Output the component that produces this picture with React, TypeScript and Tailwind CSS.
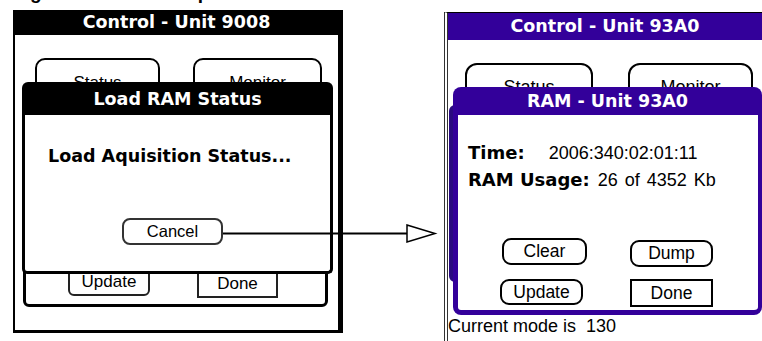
const bold = "font-['DejaVu_Sans',sans-serif] font-bold";
const reg = "font-['Liberation_Sans',Arial,sans-serif]";

function LeftScreen() {
  return (
    <div className="absolute left-[13px] top-[10px] w-[330px] h-[323px] border-l-2 border-r-[5px] border-b-[3px] border-black flex flex-col">
      <div className={`h-[25px] bg-black text-white text-[17.5px] leading-none flex items-center justify-center ${bold}`}>
        Control - Unit 9008
      </div>
      <div className={`relative flex-1 ${reg} text-[17px] text-black`}>
        <div className="absolute left-[20px] top-[23px] w-[125px] h-[40px] border-2 border-black rounded-[10px] flex justify-center pt-[10px]">
          Status
        </div>
        <div className="absolute left-[178px] top-[23px] w-[129px] h-[40px] border-2 border-black rounded-[10px] flex justify-center pt-[10px]">
          Monitor
        </div>

        {/* panel under the dialog */}
        <div className="absolute left-[8px] top-[85px] w-[305px] h-[187px] border-[3px] border-black rounded-b-[6px]">
          <div className="absolute left-[42px] top-[127px] w-[82px] h-[46px] border-2 border-[#222] rounded-[6px] flex items-end justify-center pb-[2px] leading-[20px]">
            Update
          </div>
          <div className="absolute left-[171px] top-[148px] w-[81px] h-[27px] border-2 border-[#222] flex items-end justify-center pb-[2px] leading-[20px]">
            Done
          </div>
        </div>

        {/* Load RAM Status dialog */}
        <div className="absolute left-[7px] top-[47px] w-[311px] h-[192px] flex flex-col">
          <div className={`h-[33px] bg-black rounded-t-[6px] text-white text-[17.5px] flex items-center justify-center pt-[2px] ${bold}`}>
            Load RAM Status
          </div>
          <div className="flex-1 bg-white border-[3px] border-t-0 border-black rounded-b-[5px] flex flex-col">
            <div className={`pt-[31px] pl-[23px] text-[17.5px] leading-[20px] ${bold}`}>
              Load Aquisition Status...
            </div>
            <div className="mt-[52px] ml-[97px] w-[101px] h-[27px] border-2 border-[#333] rounded-[8px] flex items-center justify-center text-[16.5px]">
              Cancel
            </div>
          </div>
        </div>
      </div>
    </div>
  );
}

function Btn({ label, w, h, square, cls }: { label: string; w: string; h: string; square?: boolean; cls?: string }) {
  return (
    <div
      className={`${w} ${h} border-2 border-black flex items-center justify-center ${square ? "" : "rounded-[9px]"} ${cls ?? ""}`}
    >
      {label}
    </div>
  );
}

function RightScreen() {
  return (
    <div className="absolute left-[444px] top-[12px] w-[330px] h-[340px] border-l-4 border-double border-[#333] border-t border-t-black flex flex-col">
      <div className={`h-[27px] bg-[#33009a] text-white text-[17.5px] leading-none flex items-center justify-center pr-[12px] ${bold}`}>
        Control - Unit 93A0
      </div>
      <div className={`relative flex-1 ${reg} text-[18px] text-black`}>
        <div className="absolute left-[17px] top-[23px] w-[128px] h-[40px] border-2 border-black rounded-[12px] flex justify-center pt-[9px]">
          Status
        </div>
        <div className="absolute left-[180px] top-[23px] w-[125px] h-[40px] border-2 border-black rounded-[12px] flex justify-center pt-[9px]">
          Monitor
        </div>

        {/* panel under the dialog */}
        <div className="absolute left-[1px] top-[65px] w-[300px] h-[177px] border-[5px] border-[#2a0a80] rounded-[6px]" />

        {/* RAM dialog */}
        <div className="absolute left-[5px] top-[47px] w-[309px] h-[228px] flex flex-col">
          <div className={`h-[28px] bg-[#33009a] rounded-t-[8px] text-white text-[17.5px] flex items-center justify-center pt-[1px] ${bold}`}>
            RAM - Unit 93A0
          </div>
          <div className="flex-1 bg-white border-[5px] border-r-4 border-t-0 border-[#33009a] rounded-b-[8px] flex flex-col pl-[10px]">
            <div className="mt-[27px] flex items-baseline leading-[22px]">
              <span className={`text-[18px] ${bold}`}>Time:</span>
              <span className="ml-[24px] text-[18px]">2006:340:02:01:11</span>
            </div>
            <div className="mt-[5px] flex items-baseline leading-[22px]">
              <span className={`text-[18px] ${bold}`}>RAM Usage:</span>
              <span className="ml-[8px] text-[18px] [word-spacing:2px]">26 of 4352 Kb</span>
            </div>
            <div className="mt-[47px] flex items-start text-[17.5px]">
              <Btn label="Clear" w="w-[85px]" h="h-[27px]" cls="ml-[34px]" />
              <Btn label="Dump" w="w-[83px]" h="h-[27px]" cls="ml-[43px] mt-[2px]" />
            </div>
            <div className="mt-[12px] flex items-start text-[17.5px]">
              <Btn label="Update" w="w-[83px]" h="h-[26px]" cls="ml-[32px]" />
              <Btn label="Done" w="w-[83px]" h="h-[28px]" square cls="ml-[47px]" />
            </div>
          </div>
        </div>

        <div className="absolute left-0 top-[276px] leading-[20px] whitespace-pre">Current mode is  130</div>
      </div>
    </div>
  );
}

export default function App() {
  return (
    <div className="relative w-[762px] h-[341px] overflow-hidden bg-white">
      {/* caption cut off at the top */}
      <div className="absolute left-0 top-0 w-[762px] h-[5px] overflow-hidden">
        <div className="absolute left-[13px] top-[-17px] whitespace-nowrap font-['Liberation_Sans',Arial,sans-serif] font-bold text-[19px] leading-[19px] text-black">
          Figure 3: RAM Example
        </div>
      </div>

      <LeftScreen />
      <RightScreen />

      {/* arrow from Cancel to the right screen */}
      <svg className="absolute left-0 top-0 pointer-events-none" width="762" height="341">
        <line x1="223" y1="233.5" x2="407" y2="233.5" stroke="#000" strokeWidth="2" />
        <polygon points="407,225 435,233.5 407,242" fill="#fff" stroke="#000" strokeWidth="1.5" />
      </svg>
    </div>
  );
}
